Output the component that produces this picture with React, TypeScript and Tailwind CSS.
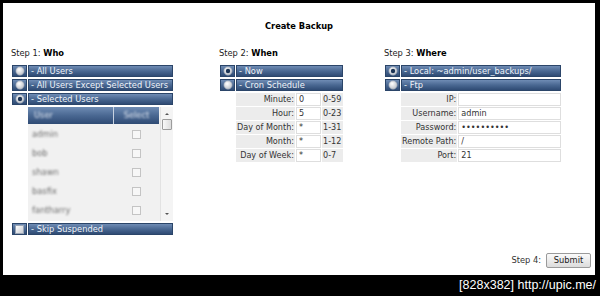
import React from "react";

const font = { fontFamily: '"DejaVu Sans", Verdana, sans-serif' };

function Radio({ on }: { on?: boolean }) {
  return (
    <svg width="10" height="10" viewBox="0 0 10 10">
      <defs>
        <radialGradient id={on ? "rg1" : "rg0"} cx="40%" cy="35%" r="70%">
          <stop offset="0%" stopColor="#ffffff" />
          <stop offset="100%" stopColor="#b9bec6" />
        </radialGradient>
      </defs>
      <circle cx="5" cy="5" r="4.2" fill={`url(#${on ? "rg1" : "rg0"})`} stroke="#8d9aad" strokeWidth="0.6" />
      {on && <circle cx="5" cy="5" r="2.2" fill="#1b3354" />}
    </svg>
  );
}

function Bar({ label, on, check }: { label: string; on?: boolean; check?: boolean }) {
  return (
    <div className="flex h-[12px] gap-[1px]">
      <div className="w-[15px] h-full flex items-center justify-center bg-gradient-to-b from-[#6f8cb4] via-[#4a6892] to-[#2f4b74] border border-[#2b4569]">
        {check ? (
          <div className="w-[9px] h-[9px] bg-gradient-to-br from-[#ffffff] to-[#c9ccd2] border border-[#9aa5b5]" />
        ) : (
          <Radio on={on} />
        )}
      </div>
      <div className="flex-1 h-full flex items-center pl-[2px] bg-gradient-to-b from-[#6f8cb4] via-[#4a6892] to-[#2f4b74] border border-[#2b4569] text-[#eef2f8] text-[8.3px] leading-none whitespace-nowrap">
        {label}
      </div>
    </div>
  );
}

function UserList() {
  const names = ["admin", "bob", "shawn", "basfix", "fantharry"];
  return (
    <div className="ml-[16px] h-[114px] flex bg-[#f1f1f1]">
      <div className="w-[131px] flex flex-col">
        <div className="h-[17px] flex bg-gradient-to-b from-[#6f8cb4] via-[#4a6892] to-[#2f4b74]">
          <div className="w-[86px] h-full flex items-center pl-[6px] border-r border-[#c8d2e0]">
            <span className="text-[#dfe6f0] text-[8.3px] blur-[1.3px]">User</span>
          </div>
          <div className="flex-1 h-full flex items-center justify-center">
            <span className="text-[#dfe6f0] text-[8.3px] blur-[1.3px]">Select</span>
          </div>
        </div>
        <div className="flex flex-col pt-[1px]">
          {names.map((n) => (
            <div key={n} className="h-[19px] flex items-center">
              <div className="w-[86px] pl-[4px] text-[#6e6e6e] text-[8.3px] blur-[1.2px]">{n}</div>
              <div className="flex-1 flex justify-center">
                <div className="w-[9px] h-[9px] border border-[#c4c4c4] bg-[#f7f7f7] blur-[0.6px]" />
              </div>
            </div>
          ))}
        </div>
      </div>
      <div className="w-[13px] ml-[1px] flex flex-col items-center bg-[#f4f4f4] border-l border-[#e2e2e2]">
        <svg width="8" height="8" viewBox="0 0 8 8" className="mt-[3px]">
          <path d="M2 5 L4 3 L6 5 Z" fill="#555" />
        </svg>
        <div className="mt-[1px] w-[10px] h-[11px] border border-[#9c9c9c] bg-gradient-to-r from-[#f8f8f8] to-[#dcdcdc] rounded-[1px]" />
        <div className="flex-1" />
        <svg width="8" height="8" viewBox="0 0 8 8" className="mb-[3px]">
          <path d="M2 3 L4 5 L6 3 Z" fill="#555" />
        </svg>
      </div>
    </div>
  );
}

function FormRow({ label, value, range, lw, iw }: { label: string; value: string; range?: string; lw: string; iw: string }) {
  return (
    <div className="flex h-[13px] gap-[1px] text-[8.1px] leading-none text-[#333] whitespace-nowrap">
      <div className={`${lw} h-full bg-[#ececec] flex items-center justify-end pr-[1px]`}>{label}</div>
      <div className={`${iw} h-full bg-white border border-[#dedede] flex items-center pl-[2px]`}>{value}</div>
      {range !== undefined && (
        <div className="flex-1 h-full bg-[#ececec] flex items-center pl-[1px]">{range}</div>
      )}
    </div>
  );
}

function Heading({ n, t }: { n: number; t: string }) {
  return (
    <div className="h-[10px] leading-[10px] text-[8.3px] text-[#222] whitespace-nowrap">
      Step {n}: <span className="font-bold text-black">{t}</span>
    </div>
  );
}

export default function App() {
  return (
    <div className="w-[600px] h-[296px] bg-black flex flex-col" style={font}>
      <div className="ml-[3px] mt-[3px] w-[592px] h-[272px] bg-white flex flex-col">
        <div className="pt-[18px] h-[27px] leading-[10px] text-center font-bold text-[8.3px] text-black">
          Create Backup
        </div>
        <div className="flex mt-[18px] pl-[8px]">
          {/* Column 1 */}
          <div className="w-[162px] flex flex-col">
            <Heading n={1} t="Who" />
            <div className="mt-[7px] pl-[1px] flex flex-col gap-[2px]">
              <Bar label="- All Users" />
              <Bar label="- All Users Except Selected Users" />
              <Bar label="- Selected Users" on />
              <UserList />
              <Bar label="- Skip Suspended" check />
            </div>
          </div>
          {/* Column 2 */}
          <div className="ml-[46px] w-[124px] flex flex-col">
            <Heading n={2} t="When" />
            <div className="mt-[7px] pl-[1px] flex flex-col gap-[2px]">
              <Bar label="- Now" on />
              <Bar label="- Cron Schedule" />
              <div className="ml-[16px] flex flex-col gap-[1px]">
                <FormRow label="Minute:" value="0" range="0-59" lw="w-[59px]" iw="w-[25px]" />
                <FormRow label="Hour:" value="5" range="0-23" lw="w-[59px]" iw="w-[25px]" />
                <FormRow label="Day of Month:" value="*" range="1-31" lw="w-[59px]" iw="w-[25px]" />
                <FormRow label="Month:" value="*" range="1-12" lw="w-[59px]" iw="w-[25px]" />
                <FormRow label="Day of Week:" value="*" range="0-7" lw="w-[59px]" iw="w-[25px]" />
              </div>
            </div>
          </div>
          {/* Column 3 */}
          <div className="ml-[41px] w-[177px] flex flex-col">
            <Heading n={3} t="Where" />
            <div className="mt-[7px] pl-[1px] flex flex-col gap-[2px]">
              <Bar label="- Local: ~admin/user_backups/" on />
              <Bar label="- Ftp" />
              <div className="ml-[16px] flex flex-col gap-[1px]">
                <FormRow label="IP:" value="" lw="w-[57px]" iw="w-[104px]" />
                <FormRow label="Username:" value="admin" lw="w-[57px]" iw="w-[104px]" />
                <FormRow label="Password:" value="••••••••••" lw="w-[57px]" iw="w-[104px]" />
                <FormRow label="Remote Path:" value="/" lw="w-[57px]" iw="w-[104px]" />
                <FormRow label="Port:" value="21" lw="w-[57px]" iw="w-[104px]" />
              </div>
            </div>
          </div>
        </div>
        <div className="mt-auto mb-[7px] pr-[4px] flex items-center justify-end gap-[5px]">
          <span className="text-[8.3px] text-[#333]">Step 4:</span>
          <button className="w-[45px] h-[15px] border border-[#9a9a9a] rounded-[2px] bg-gradient-to-b from-[#fbfbfb] to-[#dcdcdc] text-[8.3px] text-[#222] leading-none">
            Submit
          </button>
        </div>
      </div>
      <div className="flex-1 flex items-center justify-end pr-[4px]">
        <span className="text-white text-[12.5px] leading-none" style={{ fontFamily: '"Liberation Sans", sans-serif' }}>
          [828x382] http://upic.me/
        </span>
      </div>
    </div>
  );
}
